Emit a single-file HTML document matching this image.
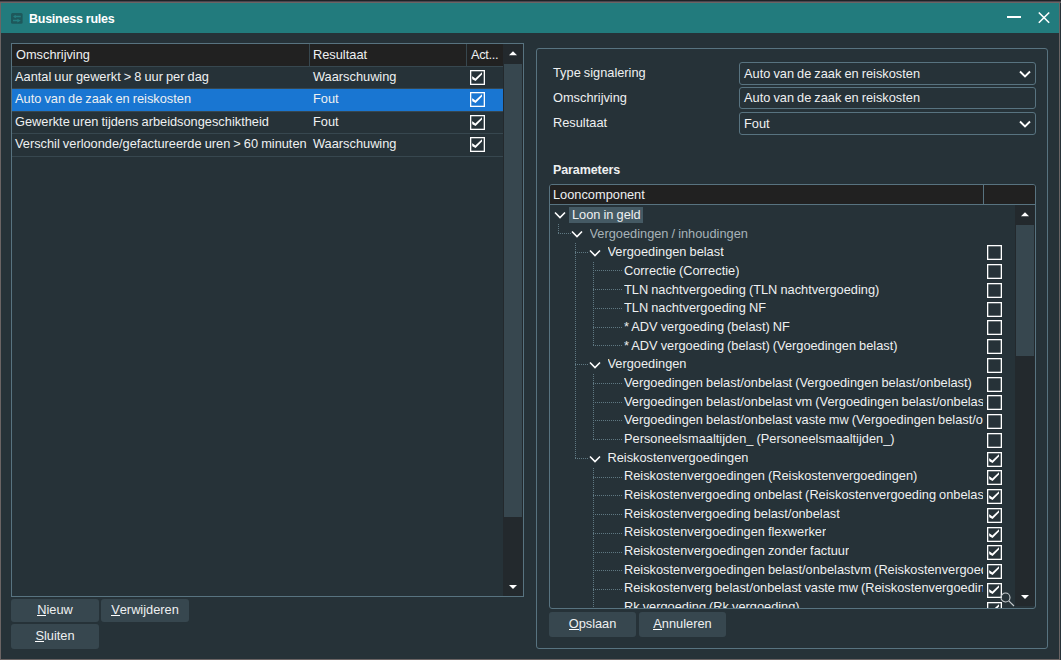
<!DOCTYPE html>
<html><head><meta charset="utf-8"><style>
html,body{margin:0;padding:0;}
body{width:1061px;height:660px;position:relative;overflow:hidden;background:#263238;font-family:"Liberation Sans",sans-serif;color:#eef0f1;}
.r{position:absolute;}
.t{position:absolute;white-space:nowrap;font-size:12.8px;line-height:15px;word-spacing:-0.5px;}
.b{font-weight:bold;}
.dim{color:#a7b2b8;}
.clip{position:absolute;overflow:hidden;}
u{text-decoration:none;position:relative;}u::after{content:'';position:absolute;left:0;right:0;top:13px;height:1px;background:#fff;}
</style></head><body>
<div class="r" style="left:0px;top:0px;width:1061px;height:1px;background:#1e2326;"></div>
<div class="r" style="left:0px;top:1px;width:1061px;height:1px;background:#4a4650;"></div>
<div class="r" style="left:0px;top:2px;width:1061px;height:1px;background:#6b6464;"></div>
<div class="r" style="left:0px;top:3px;width:1px;height:657px;background:#6b6464;"></div>
<div class="r" style="left:1059px;top:3px;width:1px;height:657px;background:#6b6464;"></div>
<div class="r" style="left:1060px;top:3px;width:1px;height:657px;background:#263238;"></div>
<div class="r" style="left:0px;top:659px;width:1060px;height:1px;background:#6b6464;"></div>
<div class="r" style="left:1px;top:3px;width:1058px;height:30px;background:#227b7d;"></div>
<svg class="r" style="left:11px;top:13px" width="12" height="11" viewBox="0 0 12 11"><rect x="0" y="0" width="11.6" height="10.8" rx="1.5" fill="#1e585b"/><path d="M3 3.5 H9.8 M2 7.5 H8" stroke="#247e80" stroke-width="1.3" fill="none"/><path d="M2 3.5 L4.8 1.9 L4.8 5.2 Z M9.8 7.5 L6.3 5.9 L6.3 9.4 Z" fill="#247e80"/></svg>
<div class="t b" style="left:29px;top:12.20px;font-size:12.5px;color:#fff;word-spacing:0;letter-spacing:-0.25px">Business rules</div>
<div class="r" style="left:1007px;top:16px;width:14px;height:2px;background:#ffffff;"></div>
<svg class="r" style="left:1036px;top:10px" width="16" height="16" viewBox="0 0 16 16"><path d="M2.8 2.5 L13.2 12.8 M13.2 2.5 L2.8 12.8" stroke="#fff" stroke-width="1.6"/></svg>
<div class="r" style="left:11px;top:43px;width:513px;height:554px;background:#587380;"></div>
<div class="r" style="left:12px;top:44px;width:511px;height:552px;background:#263238;"></div>
<div class="r" style="left:12px;top:44px;width:491px;height:22px;background:#212121;"></div>
<div class="r" style="left:309px;top:44px;width:1px;height:22px;background:#37474f;"></div>
<div class="r" style="left:466px;top:44px;width:1px;height:22px;background:#37474f;"></div>
<div class="t" style="left:16px;top:46.70px;">Omschrijving</div>
<div class="t" style="left:313px;top:46.70px;">Resultaat</div>
<div class="t" style="left:471px;top:46.70px;letter-spacing:-0.3px">Act...</div>
<div class="r" style="left:12px;top:66px;width:491px;height:1px;background:#37474f;"></div>
<div class="r" style="left:12px;top:88px;width:491px;height:1px;background:#37474f;"></div>
<div class="t" style="left:15px;top:68.60px;">Aantal uur gewerkt &gt; 8 uur per dag</div>
<div class="t" style="left:313px;top:68.60px;">Waarschuwing</div>
<div class="r" style="left:470px;top:70px;width:15px;height:15px"><svg width="15" height="15" viewBox="0 0 15 15"><rect x="0.65" y="0.65" width="13.7" height="13.7" fill="none" stroke="#ffffff" stroke-width="1.3"/><path d="M2 6.3 L3.8 7.2 L5.3 8.4 L12 2.2 L12 4.6 L5.6 11 L2.3 9.2 Z" fill="#ffffff"/></svg></div>
<div class="r" style="left:12px;top:89px;width:491px;height:22px;background:#1976d2;"></div>
<div class="r" style="left:12px;top:111px;width:491px;height:1px;background:#37474f;"></div>
<div class="t" style="left:15px;top:91.05px;">Auto van de zaak en reiskosten</div>
<div class="t" style="left:313px;top:91.05px;">Fout</div>
<div class="r" style="left:470px;top:92px;width:15px;height:15px"><svg width="15" height="15" viewBox="0 0 15 15"><rect x="0.65" y="0.65" width="13.7" height="13.7" fill="none" stroke="#ffffff" stroke-width="1.3"/><path d="M2 6.3 L3.8 7.2 L5.3 8.4 L12 2.2 L12 4.6 L5.6 11 L2.3 9.2 Z" fill="#ffffff"/></svg></div>
<div class="r" style="left:12px;top:133px;width:491px;height:1px;background:#37474f;"></div>
<div class="t" style="left:15px;top:113.50px;">Gewerkte uren tijdens arbeidsongeschiktheid</div>
<div class="t" style="left:313px;top:113.50px;">Fout</div>
<div class="r" style="left:470px;top:115px;width:15px;height:15px"><svg width="15" height="15" viewBox="0 0 15 15"><rect x="0.65" y="0.65" width="13.7" height="13.7" fill="none" stroke="#ffffff" stroke-width="1.3"/><path d="M2 6.3 L3.8 7.2 L5.3 8.4 L12 2.2 L12 4.6 L5.6 11 L2.3 9.2 Z" fill="#ffffff"/></svg></div>
<div class="r" style="left:12px;top:156px;width:491px;height:1px;background:#37474f;"></div>
<div class="t" style="left:15px;top:135.95px;">Verschil verloonde/gefactureerde uren &gt; 60 minuten</div>
<div class="t" style="left:313px;top:135.95px;">Waarschuwing</div>
<div class="r" style="left:470px;top:137px;width:15px;height:15px"><svg width="15" height="15" viewBox="0 0 15 15"><rect x="0.65" y="0.65" width="13.7" height="13.7" fill="none" stroke="#ffffff" stroke-width="1.3"/><path d="M2 6.3 L3.8 7.2 L5.3 8.4 L12 2.2 L12 4.6 L5.6 11 L2.3 9.2 Z" fill="#ffffff"/></svg></div>
<div class="r" style="left:503px;top:44px;width:20px;height:552px;background:#23292d;"></div>
<div class="r" style="left:504px;top:64px;width:18px;height:453px;background:#37474f;"></div>
<svg class="r" style="left:507px;top:49px" width="12" height="8" viewBox="0 0 12 8"><path d="M2 6.2 L6 2.2 L10 6.2 Z" fill="#fff"/></svg>
<svg class="r" style="left:507px;top:583px" width="12" height="8" viewBox="0 0 12 8"><path d="M2 2 L6 6 L10 2 Z" fill="#fff"/></svg>
<div class="r" style="left:11px;top:599px;width:88px;height:23px;background:#37474f;border-radius:3px;"></div>
<div class="t" style="left:11px;width:88px;top:602.30px;text-align:center"><u>N</u>ieuw</div>
<div class="r" style="left:101px;top:599px;width:88px;height:23px;background:#37474f;border-radius:3px;"></div>
<div class="t" style="left:101px;width:88px;top:602.30px;text-align:center"><u>V</u>erwijderen</div>
<div class="r" style="left:11px;top:624px;width:88px;height:25px;background:#37474f;border-radius:3px;"></div>
<div class="t" style="left:11px;width:88px;top:628.00px;text-align:center"><u>S</u>luiten</div>
<div class="r" style="left:536px;top:48px;width:510px;height:599px;border:1px solid #587380;border-radius:3px"></div>
<div class="t" style="left:553px;top:65.40px;">Type signalering</div>
<div class="t" style="left:553px;top:90.40px;">Omschrijving</div>
<div class="t" style="left:553px;top:115.10px;">Resultaat</div>
<div class="r" style="left:739px;top:62px;width:295px;height:21px;border:1px solid #587380;border-radius:3px"></div>
<div class="t" style="left:744px;top:66.10px;">Auto van de zaak en reiskosten</div>
<svg class="r" style="left:1018.8px;top:70px" width="12" height="8" viewBox="0 0 12 8"><path d="M1 1.5 L6 6.5 L11 1.5" fill="none" stroke="#fff" stroke-width="1.9"/></svg>
<div class="r" style="left:739px;top:87px;width:295px;height:20px;border:1px solid #587380;border-radius:3px"></div>
<div class="t" style="left:744px;top:89.50px;">Auto van de zaak en reiskosten</div>
<div class="r" style="left:739px;top:112px;width:295px;height:21px;border:1px solid #587380;border-radius:3px"></div>
<div class="t" style="left:744px;top:116.00px;">Fout</div>
<svg class="r" style="left:1018.8px;top:120px" width="12" height="8" viewBox="0 0 12 8"><path d="M1 1.5 L6 6.5 L11 1.5" fill="none" stroke="#fff" stroke-width="1.9"/></svg>
<div class="t b" style="left:553px;top:162.80px;font-size:12.5px;letter-spacing:-0.1px">Parameters</div>
<div class="r" style="left:549px;top:184px;width:485px;height:423px;border:1px solid #587380;border-radius:3px;overflow:hidden;background:#263238"></div>
<div class="r" style="left:550px;top:185px;width:485px;height:19px;background:#212121;border-radius:2px 2px 0 0;"></div>
<div class="r" style="left:983px;top:185px;width:1px;height:19px;background:#587380;"></div>
<div class="r" style="left:550px;top:204px;width:485px;height:1px;background:#587380;"></div>
<div class="t" style="left:553px;top:187.00px;">Looncomponent</div>
<div class="r" style="left:1015px;top:205px;width:20px;height:401px;background:#23292d;"></div>
<div class="r" style="left:1016px;top:225px;width:18px;height:131px;background:#37474f;"></div>
<svg class="r" style="left:1019px;top:210px" width="12" height="8" viewBox="0 0 12 8"><path d="M2 6.2 L6 2.2 L10 6.2 Z" fill="#fff"/></svg>
<svg class="r" style="left:1019px;top:593px" width="12" height="8" viewBox="0 0 12 8"><path d="M2 2 L6 6 L10 2 Z" fill="#fff"/></svg>
<div class="clip" style="left:550px;top:205px;width:465px;height:403px">
<div class="r" style="left:19px;top:2px;width:74px;height:16px;background:#455a64"></div>
<div class="r" style="left:8px;top:19px;width:1px;height:9px;background:repeating-linear-gradient(to bottom,#5f7882 0 1px,transparent 1px 2px)"></div>
<div class="r" style="left:8px;top:28px;width:13px;height:1px;background:repeating-linear-gradient(to right,#5f7882 0 1px,transparent 1px 2px)"></div>
<div class="r" style="left:25px;top:38px;width:1px;height:216px;background:repeating-linear-gradient(to bottom,#5f7882 0 1px,transparent 1px 2px)"></div>
<div class="r" style="left:25px;top:47px;width:14px;height:1px;background:repeating-linear-gradient(to right,#5f7882 0 1px,transparent 1px 2px)"></div>
<div class="r" style="left:43px;top:65px;width:29px;height:1px;background:repeating-linear-gradient(to right,#5f7882 0 1px,transparent 1px 2px)"></div>
<div class="r" style="left:43px;top:84px;width:29px;height:1px;background:repeating-linear-gradient(to right,#5f7882 0 1px,transparent 1px 2px)"></div>
<div class="r" style="left:43px;top:103px;width:29px;height:1px;background:repeating-linear-gradient(to right,#5f7882 0 1px,transparent 1px 2px)"></div>
<div class="r" style="left:43px;top:122px;width:29px;height:1px;background:repeating-linear-gradient(to right,#5f7882 0 1px,transparent 1px 2px)"></div>
<div class="r" style="left:43px;top:140px;width:29px;height:1px;background:repeating-linear-gradient(to right,#5f7882 0 1px,transparent 1px 2px)"></div>
<div class="r" style="left:25px;top:159px;width:14px;height:1px;background:repeating-linear-gradient(to right,#5f7882 0 1px,transparent 1px 2px)"></div>
<div class="r" style="left:43px;top:178px;width:29px;height:1px;background:repeating-linear-gradient(to right,#5f7882 0 1px,transparent 1px 2px)"></div>
<div class="r" style="left:43px;top:197px;width:29px;height:1px;background:repeating-linear-gradient(to right,#5f7882 0 1px,transparent 1px 2px)"></div>
<div class="r" style="left:43px;top:215px;width:29px;height:1px;background:repeating-linear-gradient(to right,#5f7882 0 1px,transparent 1px 2px)"></div>
<div class="r" style="left:43px;top:234px;width:29px;height:1px;background:repeating-linear-gradient(to right,#5f7882 0 1px,transparent 1px 2px)"></div>
<div class="r" style="left:25px;top:253px;width:14px;height:1px;background:repeating-linear-gradient(to right,#5f7882 0 1px,transparent 1px 2px)"></div>
<div class="r" style="left:43px;top:272px;width:29px;height:1px;background:repeating-linear-gradient(to right,#5f7882 0 1px,transparent 1px 2px)"></div>
<div class="r" style="left:43px;top:290px;width:29px;height:1px;background:repeating-linear-gradient(to right,#5f7882 0 1px,transparent 1px 2px)"></div>
<div class="r" style="left:43px;top:309px;width:29px;height:1px;background:repeating-linear-gradient(to right,#5f7882 0 1px,transparent 1px 2px)"></div>
<div class="r" style="left:43px;top:328px;width:29px;height:1px;background:repeating-linear-gradient(to right,#5f7882 0 1px,transparent 1px 2px)"></div>
<div class="r" style="left:43px;top:347px;width:29px;height:1px;background:repeating-linear-gradient(to right,#5f7882 0 1px,transparent 1px 2px)"></div>
<div class="r" style="left:43px;top:365px;width:29px;height:1px;background:repeating-linear-gradient(to right,#5f7882 0 1px,transparent 1px 2px)"></div>
<div class="r" style="left:43px;top:384px;width:29px;height:1px;background:repeating-linear-gradient(to right,#5f7882 0 1px,transparent 1px 2px)"></div>
<div class="r" style="left:43px;top:403px;width:29px;height:1px;background:repeating-linear-gradient(to right,#5f7882 0 1px,transparent 1px 2px)"></div>
<div class="r" style="left:43px;top:57px;width:1px;height:84px;background:repeating-linear-gradient(to bottom,#5f7882 0 1px,transparent 1px 2px)"></div>
<div class="r" style="left:43px;top:169px;width:1px;height:66px;background:repeating-linear-gradient(to bottom,#5f7882 0 1px,transparent 1px 2px)"></div>
<div class="r" style="left:43px;top:263px;width:1px;height:140px;background:repeating-linear-gradient(to bottom,#5f7882 0 1px,transparent 1px 2px)"></div>
<div class="t" style="left:22px;top:2.10px;max-width:411.0px;overflow:hidden">Loon in geld</div>
<svg class="r" style="left:3.5px;top:6.3px" width="12" height="8" viewBox="0 0 12 8"><path d="M1 1.5 L6 6.5 L11 1.5" fill="none" stroke="#fff" stroke-width="1.6"/></svg>
<div class="t dim" style="left:39.5px;top:20.76px;max-width:393.5px;overflow:hidden">Vergoedingen / inhoudingen</div>
<svg class="r" style="left:21.0px;top:25.1px" width="12" height="8" viewBox="0 0 12 8"><path d="M1 1.5 L6 6.5 L11 1.5" fill="none" stroke="#fff" stroke-width="1.6"/></svg>
<div class="t" style="left:57.5px;top:39.42px;max-width:375.5px;overflow:hidden">Vergoedingen belast</div>
<svg class="r" style="left:39.0px;top:43.8px" width="12" height="8" viewBox="0 0 12 8"><path d="M1 1.5 L6 6.5 L11 1.5" fill="none" stroke="#fff" stroke-width="1.6"/></svg>
<div class="r" style="left:437px;top:40px;width:15px;height:15px"><svg width="15" height="15" viewBox="0 0 15 15"><rect x="0.65" y="0.65" width="13.7" height="13.7" fill="none" stroke="#ffffff" stroke-width="1.3"/></svg></div>
<div class="t" style="left:74px;top:58.08px;max-width:359.0px;overflow:hidden">Correctie (Correctie)</div>
<div class="r" style="left:437px;top:59px;width:15px;height:15px"><svg width="15" height="15" viewBox="0 0 15 15"><rect x="0.65" y="0.65" width="13.7" height="13.7" fill="none" stroke="#ffffff" stroke-width="1.3"/></svg></div>
<div class="t" style="left:74px;top:76.74px;max-width:359.0px;overflow:hidden">TLN nachtvergoeding (TLN nachtvergoeding)</div>
<div class="r" style="left:437px;top:78px;width:15px;height:15px"><svg width="15" height="15" viewBox="0 0 15 15"><rect x="0.65" y="0.65" width="13.7" height="13.7" fill="none" stroke="#ffffff" stroke-width="1.3"/></svg></div>
<div class="t" style="left:74px;top:95.40px;max-width:359.0px;overflow:hidden">TLN nachtvergoeding NF</div>
<div class="r" style="left:437px;top:97px;width:15px;height:15px"><svg width="15" height="15" viewBox="0 0 15 15"><rect x="0.65" y="0.65" width="13.7" height="13.7" fill="none" stroke="#ffffff" stroke-width="1.3"/></svg></div>
<div class="t" style="left:74px;top:114.06px;max-width:359.0px;overflow:hidden">* ADV vergoeding (belast) NF</div>
<div class="r" style="left:437px;top:115px;width:15px;height:15px"><svg width="15" height="15" viewBox="0 0 15 15"><rect x="0.65" y="0.65" width="13.7" height="13.7" fill="none" stroke="#ffffff" stroke-width="1.3"/></svg></div>
<div class="t" style="left:74px;top:132.72px;max-width:359.0px;overflow:hidden">* ADV vergoeding (belast) (Vergoedingen belast)</div>
<div class="r" style="left:437px;top:134px;width:15px;height:15px"><svg width="15" height="15" viewBox="0 0 15 15"><rect x="0.65" y="0.65" width="13.7" height="13.7" fill="none" stroke="#ffffff" stroke-width="1.3"/></svg></div>
<div class="t" style="left:57.5px;top:151.38px;max-width:375.5px;overflow:hidden">Vergoedingen</div>
<svg class="r" style="left:39.0px;top:156.3px" width="12" height="8" viewBox="0 0 12 8"><path d="M1 1.5 L6 6.5 L11 1.5" fill="none" stroke="#fff" stroke-width="1.6"/></svg>
<div class="r" style="left:437px;top:153px;width:15px;height:15px"><svg width="15" height="15" viewBox="0 0 15 15"><rect x="0.65" y="0.65" width="13.7" height="13.7" fill="none" stroke="#ffffff" stroke-width="1.3"/></svg></div>
<div class="t" style="left:74px;top:170.04px;max-width:359.0px;overflow:hidden">Vergoedingen belast/onbelast (Vergoedingen belast/onbelast)</div>
<div class="r" style="left:437px;top:172px;width:15px;height:15px"><svg width="15" height="15" viewBox="0 0 15 15"><rect x="0.65" y="0.65" width="13.7" height="13.7" fill="none" stroke="#ffffff" stroke-width="1.3"/></svg></div>
<div class="t" style="left:74px;top:188.70px;max-width:359.0px;overflow:hidden">Vergoedingen belast/onbelast vm (Vergoedingen belast/onbelast vm)</div>
<div class="r" style="left:437px;top:190px;width:15px;height:15px"><svg width="15" height="15" viewBox="0 0 15 15"><rect x="0.65" y="0.65" width="13.7" height="13.7" fill="none" stroke="#ffffff" stroke-width="1.3"/></svg></div>
<div class="t" style="left:74px;top:207.36px;max-width:359.0px;overflow:hidden">Vergoedingen belast/onbelast vaste mw (Vergoedingen belast/onbelast vaste mw)</div>
<div class="r" style="left:437px;top:209px;width:15px;height:15px"><svg width="15" height="15" viewBox="0 0 15 15"><rect x="0.65" y="0.65" width="13.7" height="13.7" fill="none" stroke="#ffffff" stroke-width="1.3"/></svg></div>
<div class="t" style="left:74px;top:226.02px;max-width:359.0px;overflow:hidden">Personeelsmaaltijden_ (Personeelsmaaltijden_)</div>
<div class="r" style="left:437px;top:228px;width:15px;height:15px"><svg width="15" height="15" viewBox="0 0 15 15"><rect x="0.65" y="0.65" width="13.7" height="13.7" fill="none" stroke="#ffffff" stroke-width="1.3"/></svg></div>
<div class="t" style="left:57.5px;top:244.68px;max-width:375.5px;overflow:hidden">Reiskostenvergoedingen</div>
<svg class="r" style="left:39.0px;top:250.1px" width="12" height="8" viewBox="0 0 12 8"><path d="M1 1.5 L6 6.5 L11 1.5" fill="none" stroke="#fff" stroke-width="1.6"/></svg>
<div class="r" style="left:437px;top:247px;width:15px;height:15px"><svg width="15" height="15" viewBox="0 0 15 15"><rect x="0.65" y="0.65" width="13.7" height="13.7" fill="none" stroke="#ffffff" stroke-width="1.3"/><path d="M2 6.3 L3.8 7.2 L5.3 8.4 L12 2.2 L12 4.6 L5.6 11 L2.3 9.2 Z" fill="#ffffff"/></svg></div>
<div class="t" style="left:74px;top:263.34px;max-width:359.0px;overflow:hidden">Reiskostenvergoedingen (Reiskostenvergoedingen)</div>
<div class="r" style="left:437px;top:265px;width:15px;height:15px"><svg width="15" height="15" viewBox="0 0 15 15"><rect x="0.65" y="0.65" width="13.7" height="13.7" fill="none" stroke="#ffffff" stroke-width="1.3"/><path d="M2 6.3 L3.8 7.2 L5.3 8.4 L12 2.2 L12 4.6 L5.6 11 L2.3 9.2 Z" fill="#ffffff"/></svg></div>
<div class="t" style="left:74px;top:282.00px;max-width:359.0px;overflow:hidden">Reiskostenvergoeding onbelast (Reiskostenvergoeding onbelast)</div>
<div class="r" style="left:437px;top:284px;width:15px;height:15px"><svg width="15" height="15" viewBox="0 0 15 15"><rect x="0.65" y="0.65" width="13.7" height="13.7" fill="none" stroke="#ffffff" stroke-width="1.3"/><path d="M2 6.3 L3.8 7.2 L5.3 8.4 L12 2.2 L12 4.6 L5.6 11 L2.3 9.2 Z" fill="#ffffff"/></svg></div>
<div class="t" style="left:74px;top:300.66px;max-width:359.0px;overflow:hidden">Reiskostenvergoeding belast/onbelast</div>
<div class="r" style="left:437px;top:303px;width:15px;height:15px"><svg width="15" height="15" viewBox="0 0 15 15"><rect x="0.65" y="0.65" width="13.7" height="13.7" fill="none" stroke="#ffffff" stroke-width="1.3"/><path d="M2 6.3 L3.8 7.2 L5.3 8.4 L12 2.2 L12 4.6 L5.6 11 L2.3 9.2 Z" fill="#ffffff"/></svg></div>
<div class="t" style="left:74px;top:319.32px;max-width:359.0px;overflow:hidden">Reiskostenvergoedingen flexwerker</div>
<div class="r" style="left:437px;top:322px;width:15px;height:15px"><svg width="15" height="15" viewBox="0 0 15 15"><rect x="0.65" y="0.65" width="13.7" height="13.7" fill="none" stroke="#ffffff" stroke-width="1.3"/><path d="M2 6.3 L3.8 7.2 L5.3 8.4 L12 2.2 L12 4.6 L5.6 11 L2.3 9.2 Z" fill="#ffffff"/></svg></div>
<div class="t" style="left:74px;top:337.98px;max-width:359.0px;overflow:hidden">Reiskostenvergoedingen zonder factuur</div>
<div class="r" style="left:437px;top:340px;width:15px;height:15px"><svg width="15" height="15" viewBox="0 0 15 15"><rect x="0.65" y="0.65" width="13.7" height="13.7" fill="none" stroke="#ffffff" stroke-width="1.3"/><path d="M2 6.3 L3.8 7.2 L5.3 8.4 L12 2.2 L12 4.6 L5.6 11 L2.3 9.2 Z" fill="#ffffff"/></svg></div>
<div class="t" style="left:74px;top:356.64px;max-width:359.0px;overflow:hidden">Reiskostenvergoedingen belast/onbelastvm (Reiskostenvergoedingen belast/onbelastvm)</div>
<div class="r" style="left:437px;top:359px;width:15px;height:15px"><svg width="15" height="15" viewBox="0 0 15 15"><rect x="0.65" y="0.65" width="13.7" height="13.7" fill="none" stroke="#ffffff" stroke-width="1.3"/><path d="M2 6.3 L3.8 7.2 L5.3 8.4 L12 2.2 L12 4.6 L5.6 11 L2.3 9.2 Z" fill="#ffffff"/></svg></div>
<div class="t" style="left:74px;top:375.30px;max-width:359.0px;overflow:hidden">Reiskostenverg belast/onbelast vaste mw (Reiskostenvergoedingen belast/onbelast vaste mw)</div>
<div class="r" style="left:437px;top:378px;width:15px;height:15px"><svg width="15" height="15" viewBox="0 0 15 15"><rect x="0.65" y="0.65" width="13.7" height="13.7" fill="none" stroke="#ffffff" stroke-width="1.3"/><path d="M2 6.3 L3.8 7.2 L5.3 8.4 L12 2.2 L12 4.6 L5.6 11 L2.3 9.2 Z" fill="#ffffff"/></svg></div>
<div class="t" style="left:74px;top:393.96px;max-width:359.0px;overflow:hidden">Rk vergoeding (Rk vergoeding)</div>
<div class="r" style="left:437px;top:397px;width:15px;height:15px"><svg width="15" height="15" viewBox="0 0 15 15"><rect x="0.65" y="0.65" width="13.7" height="13.7" fill="none" stroke="#ffffff" stroke-width="1.3"/><path d="M2 6.3 L3.8 7.2 L5.3 8.4 L12 2.2 L12 4.6 L5.6 11 L2.3 9.2 Z" fill="#ffffff"/></svg></div>
</div>
<svg class="r" style="left:996.5px;top:589px" width="20" height="20" viewBox="0 0 20 20"><circle cx="8.5" cy="8.5" r="4.5" fill="none" stroke="#c8cdd0" stroke-width="1.1"/><path d="M11.8 11.8 L17 17" stroke="#c8cdd0" stroke-width="1.1"/></svg>
<div class="r" style="left:549px;top:612px;width:87px;height:25px;background:#37474f;border-radius:3px;"></div>
<div class="t" style="left:549px;width:87px;top:616.00px;text-align:center"><u>O</u>pslaan</div>
<div class="r" style="left:639px;top:612px;width:87px;height:25px;background:#37474f;border-radius:3px;"></div>
<div class="t" style="left:639px;width:87px;top:616.00px;text-align:center"><u>A</u>nnuleren</div>
</body></html>
